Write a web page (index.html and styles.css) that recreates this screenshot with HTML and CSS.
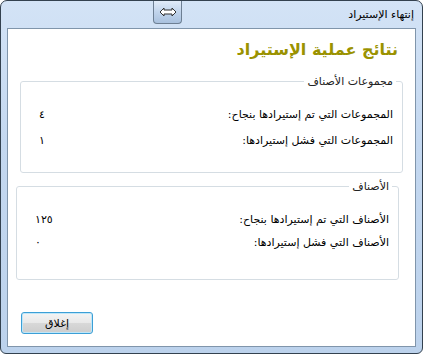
FILE: index.html
```html
<!DOCTYPE html>
<html lang="ar" dir="rtl">
<head>
    <meta charset="UTF-8">
    <title>إنتهاء الإستيراد</title>
    <link rel="stylesheet" href="styles.css">
</head>
<body>

<div class="window">

    <!-- Title bar -->
    <div class="titlebar">
        <span class="title">إنتهاء الإستيراد</span>
        <div class="tab-btn">
            <svg width="18" height="10" viewBox="0 0 18 10">
                <path d="M1 5 L5 1 L5 3 L13 3 L13 1 L17 5 L13 9 L13 7 L5 7 L5 9 Z" fill="#fff" stroke="#333" stroke-width="1" stroke-linejoin="round"/>
            </svg>
        </div>
    </div>

    <!-- Client area -->
    <div class="client">
        <h1 class="heading">نتائج عملية الإستيراد</h1>

        <fieldset class="group group-first">
            <legend>مجموعات الأصناف</legend>
            <div class="row">
                <span class="label">المجموعات التي تم إستيرادها بنجاح:</span>
                <span class="value">٤</span>
            </div>
            <div class="row">
                <span class="label">المجموعات التي فشل إستيرادها:</span>
                <span class="value">١</span>
            </div>
        </fieldset>

        <fieldset class="group group-second">
            <legend>الأصناف</legend>
            <div class="row">
                <span class="label">الأصناف التي تم إستيرادها بنجاح:</span>
                <span class="value">١٢٥</span>
            </div>
            <div class="row">
                <span class="label">الأصناف التي فشل إستيرادها:</span>
                <span class="value">٠</span>
            </div>
        </fieldset>

        <div class="footer">
            <button class="close-btn">إغلاق</button>
        </div>
    </div>

</div>

</body>
</html>
```

FILE: styles.css
```css
html, body { margin: 0; padding: 0; }
body { font-family: "DejaVu Sans", sans-serif; font-size: 11px; color: #000; background: #fff; }

.window { width: 423px; height: 354px; box-sizing: border-box; border: 1px solid #33414f; border-radius: 7px 7px 6px 6px; background: linear-gradient(to bottom, #d3e3f6, #c4d8f0 40%, #bcd2ec); padding: 0 6px 6px 6px; display: flex; flex-direction: column; position: relative; overflow: hidden; }

.titlebar { height: 27px; display: flex; align-items: center; padding-right: 2px; }
.title { font-size: 11px; color: #000; }
.tab-btn { position: absolute; left: 152px; top: -1px; width: 29px; height: 24px; box-sizing: border-box; border: 1px solid #6d7f93; border-top: none; border-radius: 0 0 4px 4px; background: linear-gradient(to bottom, #e4eefa, #c2d5ec 50%, #a9c1de); display: flex; align-items: center; justify-content: center; }

.client { flex: 1; background: #fff; border: 1px solid #8095ab; position: relative; }

.heading { margin: 8px 17px 0 0; font-size: 16px; font-weight: bold; color: #9a9200; line-height: 26px; }

.group { border: 1px solid #d5dde3; border-radius: 3px; padding: 0; min-width: 0; }
.group legend { padding: 0 3px; margin-right: 6px; font-size: 11px; color: #222; }
.group-first { margin: 12px 12px 0 12px; height: 98px; box-sizing: border-box; }
.group-second { margin: 7px 16px 0 8px; height: 100px; box-sizing: border-box; }

.row { display: flex; align-items: center; height: 26px; padding: 0 9px 0 0; }
.group-first .row:first-of-type { margin-top: 13px; }
.group-second .row { height: 23px; }
.group-second .row:first-of-type { margin-top: 15px; }
.label { flex: 1; }
.value { width: 50px; direction: ltr; text-align: left; padding-left: 18px; }

.footer { position: absolute; left: 13px; bottom: 12px; }
.close-btn { width: 72px; height: 22px; font-family: "DejaVu Sans", sans-serif; font-size: 11px; color: #000; border: 1px solid #3c9fd6; border-radius: 3px; background: linear-gradient(to bottom, #f4f4f4, #e8e8e8 50%, #d8d8d8 51%, #cdcdcd); box-shadow: inset 0 0 0 1px #bfe6f8; padding: 0; }
```
